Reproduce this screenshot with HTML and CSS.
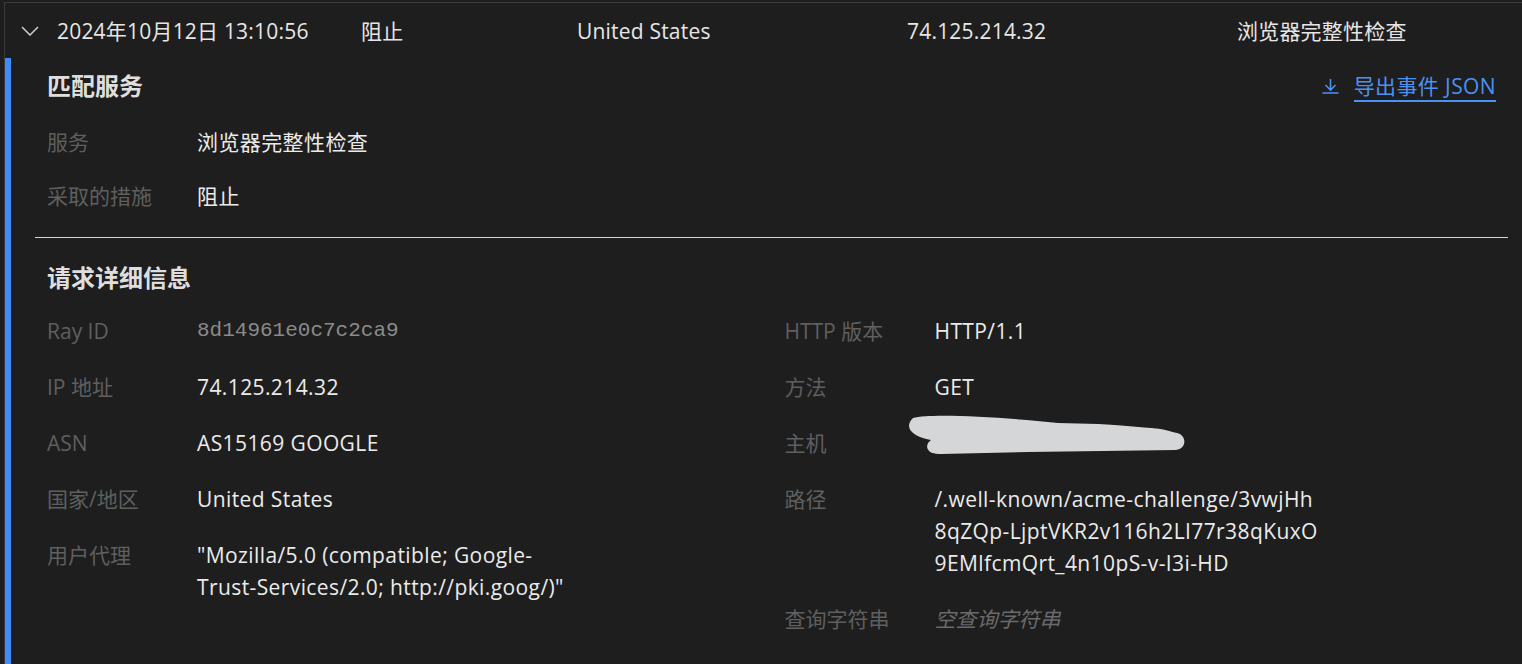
FILE: index.html
```html
<!DOCTYPE html>
<html lang="zh-CN">
<head>
<meta charset="utf-8">
<title>事件详情</title>
<link rel="stylesheet" href="styles.css">
</head>
<body>
<div class="event">
  <div class="event-head">
    <span class="chev">
      <svg width="18" height="10" viewBox="0 0 18 10"><path d="M1 1 L9 9 L17 1" fill="none" stroke="#cfcfcf" stroke-width="1.5"/></svg>
    </span>
    <span class="cell">2024年10月12日 13:10:56</span>
    <span class="cell">阻止</span>
    <span class="cell">United States</span>
    <span class="cell">74.125.214.32</span>
    <span class="cell">浏览器完整性检查</span>
  </div>
  <div class="event-detail">
    <section class="sec sec-match">
      <div class="sec-head">
        <h3 class="sec-title">匹配服务</h3>
        <a class="export" href="#">
          <svg class="export-icon" width="17" height="16" viewBox="0 0 17 16"><path d="M8.5 1 V12 M3.5 7 L8.5 12 L13.5 7 M0.5 15 H16.5" fill="none" stroke="#4a92f2" stroke-width="1.6"/></svg>
          <span class="export-text">导出事件 JSON</span>
        </a>
      </div>
      <dl class="kv kv-match">
        <div class="row"><dt>服务</dt><dd>浏览器完整性检查</dd></div>
        <div class="row"><dt>采取的措施</dt><dd>阻止</dd></div>
      </dl>
    </section>
    <hr class="divider">
    <section class="sec sec-req">
      <h3 class="sec-title">请求详细信息</h3>
      <div class="cols">
        <dl class="kv">
          <div class="row"><dt>Ray ID</dt><dd class="mono">8d14961e0c7c2ca9</dd></div>
          <div class="row"><dt>IP 地址</dt><dd>74.125.214.32</dd></div>
          <div class="row"><dt>ASN</dt><dd>AS15169 GOOGLE</dd></div>
          <div class="row"><dt>国家/地区</dt><dd>United States</dd></div>
          <div class="row"><dt>用户代理</dt><dd>"Mozilla/5.0 (compatible; Google-Trust-Services/2.0; http://pki.goog/)"</dd></div>
        </dl>
        <dl class="kv">
          <div class="row"><dt>HTTP 版本</dt><dd>HTTP/1.1</dd></div>
          <div class="row"><dt>方法</dt><dd>GET</dd></div>
          <div class="row"><dt>主机</dt><dd class="redacted">
            <svg class="scribble" width="280" height="32" viewBox="0 0 280 32"><path d="M5 -9 C23 -14 93 -10 150 -4 L190 -3 C215 -2 225 0 243 1 C258 2 263 5 269 6 C279 8 279 22 268 23 L120 25 L33 27 C18 28 16 18 23 13 C5 10 -5 1 5 -9 Z" fill="#d5d6d7"/></svg>
          </dd></div>
          <div class="row"><dt>路径</dt><dd class="path">/.well-known/acme-challenge/3vwjHh8qZQp-LjptVKR2v116h2LI77r38qKuxO9EMlfcmQrt_4n10pS-v-I3i-HD</dd></div>
          <div class="row"><dt>查询字符串</dt><dd class="empty">空查询字符串</dd></div>
        </dl>
      </div>
    </section>
  </div>
</div>
</body>
</html>
```

FILE: styles.css
```css
html, body {
  margin: 0;
  padding: 0;
  background: #1e1e1e;
  height: 100%;
  overflow: hidden;
}

body {
  font-family: "Open Sans", "Noto Sans CJK SC", sans-serif;
  font-size: 21px;
  color: #e6e6e6;
  padding: 2px 0 0 4px;
  box-sizing: border-box;
  display: flex;
  flex-direction: column;
}

.event {
  flex: 1;
  display: flex;
  flex-direction: column;
  border-top: 1px solid #3e3e3e;
  border-left: 1px solid #3a3a3a;
}

.event-head {
  display: grid;
  grid-template-columns: 52px 304px 216px 330px 330px 1fr;
  align-items: center;
  height: 55px;
  flex: none;
}

.chev {
  display: flex;
  justify-content: flex-end;
  padding-right: 18px;
  padding-top: 1px;
}

.chev svg { display: block; }

.cell {
  color: #e6e6e6;
  white-space: nowrap;
  line-height: 32px;
  letter-spacing: 0.2px;
}

.event-detail {
  flex: 1;
  border-left: 6px solid #3f8dfb;
  padding: 10px 14px 0 24px;
}

.sec {
  padding: 0 12px;
}

.sec-head {
  display: flex;
  justify-content: space-between;
  align-items: center;
  height: 36px;
}

.sec-title {
  margin: 0;
  font-size: 24px;
  line-height: 36px;
  font-weight: 700;
  color: #dedede;
}

.export {
  display: flex;
  align-items: center;
  gap: 15px;
  text-decoration: none;
  color: #4a92f2;
}

.export-icon {
  display: block;
  flex: none;
  margin-top: 0;
}

.export-text {
  line-height: 28px;
  border-bottom: 2px solid #4a92f2;
  margin-top: 2px;
  letter-spacing: 0.4px;
}

.kv {
  margin: 0;
  display: flex;
  flex-direction: column;
  gap: 24px;
}

.kv-match {
  margin-top: 22px;
  gap: 22px;
}

.row {
  display: grid;
  grid-template-columns: 150px minmax(0, 386px);
  line-height: 32px;
}

dt {
  color: #5f5f5f;
  white-space: nowrap;
}

dd {
  margin: 0;
  color: #ebebeb;
  letter-spacing: 0.4px;
}

.mono {
  font-family: "Liberation Mono", monospace;
  color: #8a8a8a;
  letter-spacing: 0;
}

.path {
  word-break: break-all;
}

.empty {
  font-style: italic;
  color: #6a6a6a;
  letter-spacing: 0;
}

.redacted {
  height: 32px;
}

.scribble {
  display: block;
  overflow: visible;
  margin-left: -27px;
}

.divider {
  border: 0;
  border-top: 1px solid #d6d6d6;
  margin: 25px 0 0 0;
}

.sec-req {
  padding-top: 22px;
}

.cols {
  display: grid;
  grid-template-columns: 1fr 1fr;
  column-gap: 26px;
  margin-top: 19px;
}
```
